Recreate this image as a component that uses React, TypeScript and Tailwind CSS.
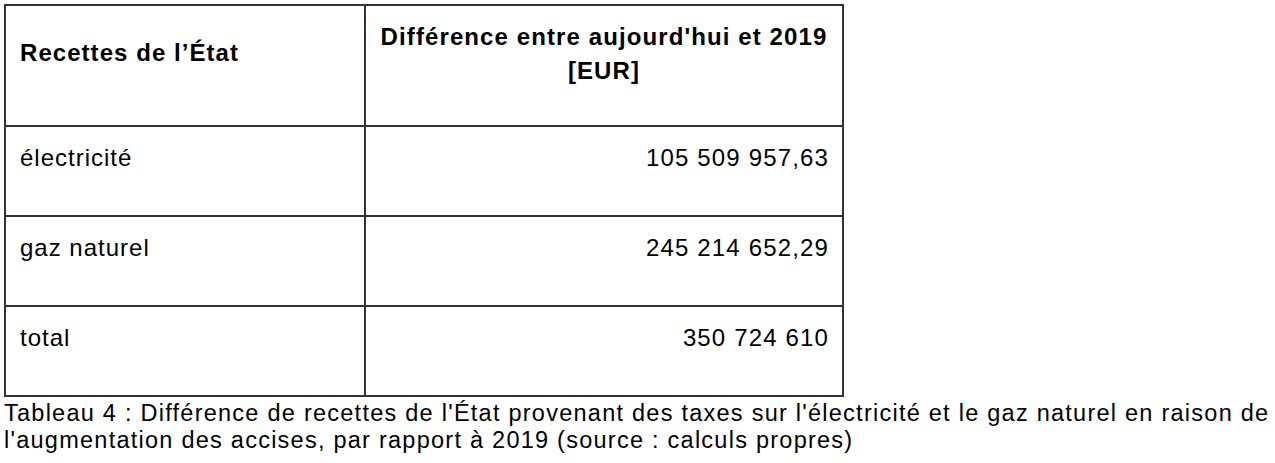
const rows = [
  { label: "électricité", value: "105 509 957,63" },
  { label: "gaz naturel", value: "245 214 652,29" },
  { label: "total", value: "350 724 610" },
];

export default function App() {
  return (
    <div className="min-h-[463px] w-[1275px] bg-white pl-1 pt-1 text-black [font-family:'Liberation_Sans',Arial,sans-serif]">
      <table className="w-[840px] border-collapse">
        <tbody>
          <tr className="h-[121px]">
            <th className="w-[360px] border-2 border-[#333] px-[14px] pt-[33px] text-left align-top text-[24px] font-bold leading-[28px] tracking-[1.05px]">
              Recettes de l’État
            </th>
            <th className="border-2 border-[#333] px-[14px] pt-[14px] text-center align-top text-[24px] font-bold leading-[34px] tracking-[1.1px]">
              Différence entre aujourd'hui et 2019
              <br />
              [EUR]
            </th>
          </tr>
          {rows.map((row) => (
            <tr key={row.label} className="h-[90px]">
              <td className="border-2 border-[#333] px-[14px] pt-[17px] align-top text-[24px] leading-[28px] tracking-[1px]">
                {row.label}
              </td>
              <td className="border-2 border-[#333] pl-[14px] pr-[13px] pt-[17px] text-right align-top text-[24px] leading-[28px] tracking-[1.15px]">
                {row.value}
              </td>
            </tr>
          ))}
        </tbody>
      </table>
      <p className="mt-[3px] whitespace-nowrap text-[23.5px] leading-[27px] tracking-[1.25px]">
        Tableau 4 : Différence de recettes de l'État provenant des taxes sur l'électricité et le gaz naturel en raison de
        <br />
        l'augmentation des accises, par rapport à 2019 (source : calculs propres)
      </p>
    </div>
  );
}
